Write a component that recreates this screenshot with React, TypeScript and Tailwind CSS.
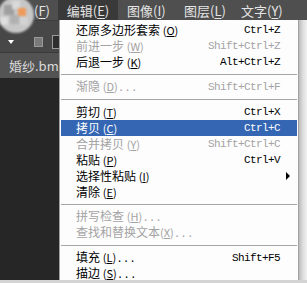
import { ReactNode } from "react";

type MenuItem =
  | { sep: true }
  | {
      sep?: false;
      label: string;
      hotkey: string;
      gap?: boolean;
      tail?: string;
      shortcut?: string;
      disabled?: boolean;
      active?: boolean;
      submenu?: boolean;
    };

const editItems: MenuItem[] = [
  { label: "还原多边形套索", hotkey: "O", gap: true, shortcut: "Ctrl+Z" },
  { label: "前进一步", hotkey: "W", gap: true, shortcut: "Shift+Ctrl+Z", disabled: true },
  { label: "后退一步", hotkey: "K", gap: true, shortcut: "Alt+Ctrl+Z" },
  { sep: true },
  { label: "渐隐", hotkey: "D", gap: true, tail: "...", shortcut: "Shift+Ctrl+F", disabled: true },
  { sep: true },
  { label: "剪切", hotkey: "T", gap: true, shortcut: "Ctrl+X" },
  { label: "拷贝", hotkey: "C", gap: true, shortcut: "Ctrl+C", active: true },
  { label: "合并拷贝", hotkey: "Y", gap: true, shortcut: "Shift+Ctrl+C", disabled: true },
  { label: "粘贴", hotkey: "P", gap: true, shortcut: "Ctrl+V" },
  { label: "选择性粘贴", hotkey: "I", gap: true, submenu: true },
  { label: "清除", hotkey: "E", gap: true },
  { sep: true },
  { label: "拼写检查", hotkey: "H", gap: true, tail: "...", disabled: true },
  { label: "查找和替换文本", hotkey: "X", tail: "...", disabled: true },
  { sep: true },
  { label: "填充", hotkey: "L", gap: true, tail: "...", shortcut: "Shift+F5" },
  { label: "描边", hotkey: "S", gap: true, tail: "..." },
];

const cjk = "font-['Noto_Sans_CJK_SC','Noto_Sans',sans-serif]";
const mono = "font-['Liberation_Mono','DejaVu_Sans_Mono',monospace]";

function TopMenu({ label, hotkey, className }: { label: string; hotkey: string; className: string }) {
  return (
    <div className={`flex h-full items-center text-[13px] leading-none text-[#e4e4e4] ${className}`}>
      {label}(<span className="underline underline-offset-2">{hotkey}</span>)
    </div>
  );
}

function MenuRow({ item }: { item: Exclude<MenuItem, { sep: true }> }) {
  const color = item.active ? "text-white" : item.disabled ? "text-[#a3a3a3]" : "text-black";
  let label: ReactNode = (
    <span className="whitespace-nowrap">
      {item.label}
      {item.gap ? " " : ""}
      <span className="text-[11px]">
        (<span className="underline underline-offset-1">{item.hotkey}</span>)
      </span>
      {item.tail && <span className={`${mono} text-[11px]`}>{item.tail}</span>}
    </span>
  );

  return (
    <div
      className={`flex h-[16px] shrink-0 items-center justify-between pl-[15px] pr-[17px] text-[12px] leading-none ${color} ${
        item.active ? "bg-[#3466b4]" : ""
      }`}
    >
      {label}
      {item.shortcut && (
        <span className={`${mono} text-[11px] tracking-[-0.6px]`}>{item.shortcut}</span>
      )}
      {item.submenu && (
        <span className="mr-[-10px] h-0 w-0 border-y-[4px] border-l-[4px] border-y-transparent border-l-black" />
      )}
    </div>
  );
}

export default function App() {
  return (
    <div className={`relative flex h-[283px] w-[307px] flex-col overflow-hidden bg-[#262626] ${cjk}`}>
      {/* menu bar */}
      <div className="flex h-[20px] shrink-0 bg-[#4f4f4f]">
        <TopMenu label="" hotkey="F" className="w-[58px] pl-[34px]" />
        <TopMenu label="编辑" hotkey="E" className="w-[60px] justify-center bg-[#393939]" />
        <TopMenu label="图像" hotkey="I" className="w-[57px] pl-[9px]" />
        <TopMenu label="图层" hotkey="L" className="w-[57px] pl-[9px]" />
        <TopMenu label="文字" hotkey="Y" className="w-[57px] pl-[9px]" />
      </div>

      <div className="flex h-[260px] shrink-0">
        {/* workspace left */}
        <div className="flex w-[59px] shrink-0 flex-col">
          <div className="flex h-[32px] items-center gap-[20px] border-t border-[#3e3e3e] bg-[#474747] pl-[8px] pt-[10px]">
            <span className="h-0 w-0 border-x-[3px] border-t-[4px] border-x-transparent border-t-white" />
            <span className="h-[10px] w-[10px] border border-[#9a9a9a] bg-[#7a7a7a]" />
            <span className="-ml-[11px] h-[14px] w-[8px] border border-r-0 border-[#9a9a9a] bg-[#2e2e2e]" />
          </div>
          <div className="flex h-[26px] items-center border-t border-[#3a3a3a] bg-[#535353] pl-[9px] text-[13px] text-[#dadada]">
            <span className="whitespace-nowrap">婚纱.bmp</span>
          </div>
          <div className="flex-1 bg-[#262626]" />
        </div>

        {/* edit menu */}
        <div className="flex w-[240px] shrink-0 flex-col border-x border-[#a0a0a0] bg-[#fdfdfd] px-px pt-[2px]">
          {editItems.map((item, i) =>
            item.sep ? (
              <div key={i} className="flex h-[9px] shrink-0 flex-col justify-center">
                <div className="h-px bg-[#a6a6a6]" />
              </div>
            ) : (
              <MenuRow key={i} item={item} />
            )
          )}
        </div>

        <div className="flex-1 bg-linear-to-r from-[#bcbcbc] via-[#dedede] to-[#efefef]" />
      </div>

      <div className="h-[3px] shrink-0 bg-[#d4d4d4]" />

      {/* blurred app logo */}
      <div className="absolute -left-[2px] -top-[3px] h-[36px] w-[36px] overflow-hidden rounded-full bg-[#c7c7c7] blur-[1px]">
        <div className="absolute left-[6px] top-[8px] h-[10px] w-[10px] bg-[#9f9f9f]" />
        <div className="absolute left-[14px] top-[4px] h-[8px] w-[8px] bg-[#d9d9d9]" />
        <div className="absolute left-[20px] top-[11px] h-[8px] w-[8px] bg-[#ef9a5a]" />
        <div className="absolute left-[12px] top-[18px] h-[9px] w-[9px] bg-[#b1b1b1]" />
        <div className="absolute left-[22px] top-[20px] h-[8px] w-[8px] bg-[#d3d3d3]" />
        <div className="absolute left-[2px] top-[20px] h-[8px] w-[8px] bg-[#dedede]" />
      </div>
    </div>
  );
}
